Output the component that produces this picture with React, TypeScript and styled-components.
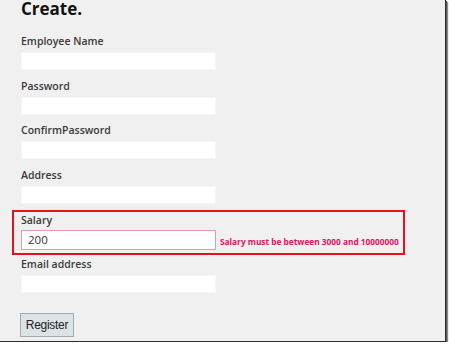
import React from "react";
import styled, { createGlobalStyle } from "styled-components";

const Global = createGlobalStyle`
  html, body { margin: 0; padding: 0; background: #ffffff; }
  body { font-family: "Open Sans", "Noto Sans", sans-serif; }
`;

const Panel = styled.div`
  width: 424px;
  height: 341px;
  padding-left: 21px;
  background: #f0f0f0;
  border-right: 1px solid #2e2e2e;
  border-bottom: 1px solid #2e2e2e;
  box-shadow: 1px 1px 0 #5a5a5a, 2px 2px 1px rgba(0, 0, 0, 0.45);
  display: flex;
  flex-direction: column;
  overflow: hidden;
`;

const Heading = styled.h2`
  margin: 0;
  padding-top: 1px;
  font-family: "Open Sans", sans-serif;
  font-weight: 700;
  font-size: 17px;
  line-height: 16px;
  color: #111;
`;

const Field = styled.div<{ $top: number }>`
  display: flex;
  flex-direction: column;
  margin-top: ${(p) => p.$top}px;
`;

const Label = styled.label`
  font-family: "Open Sans", sans-serif;
  font-size: 10.5px;
  font-weight: 600;
  line-height: 14px;
  height: 14px;
  color: #3a3a3a;
`;

const Row = styled.div`
  display: flex;
  align-items: center;
  margin-top: 4px;
`;

const Input = styled.input<{ $invalid?: boolean }>`
  box-sizing: border-box;
  width: 195px;
  height: ${(p) => (p.$invalid ? 20 : 18)}px;
  margin: 0;
  padding: 0 6px;
  border: 1px solid ${(p) => (p.$invalid ? "#e79aae" : "#f6f6f6")};
  background: #ffffff;
  font-family: "Open Sans", sans-serif;
  font-size: 11.5px;
  color: #333;
  outline: none;
`;

const ErrorBox = styled.div`
  box-sizing: border-box;
  margin-top: 6px;
  margin-left: -9px;
  width: 393px;
  padding: 1px 0 3px 7px;
  border: 2px solid #e8101c;
  display: flex;
  flex-direction: column;

  ${Row} {
    margin-top: 3px;
  }
`;

const ErrorText = styled.span`
  margin-left: 4px;
  margin-top: 3px;
  font-family: "Open Sans", sans-serif;
  font-weight: 700;
  font-size: 8.3px;
  color: #e0125e;
  white-space: nowrap;
`;

const Button = styled.button`
  box-sizing: border-box;
  margin-top: 19.5px;
  margin-left: -1px;
  width: 54px;
  height: 24px;
  padding: 0;
  background: #dce3e7;
  border: 1px solid #a3abb0;
  font-family: "Liberation Sans", Arial, sans-serif;
  font-size: 12px;
  letter-spacing: -0.3px;
  color: #222;
`;

const fields = [
  { label: "Employee Name", top: 17 },
  { label: "Password", top: 8.5 },
  { label: "ConfirmPassword", top: 8.5 },
  { label: "Address", top: 8.5 },
];

export default function App() {
  return (
    <>
      <Global />
      <Panel>
        <Heading>Create.</Heading>
        {fields.map((f) => (
          <Field key={f.label} $top={f.top}>
            <Label>{f.label}</Label>
            <Row>
              <Input type="text" />
            </Row>
          </Field>
        ))}
        <ErrorBox>
          <Label>Salary</Label>
          <Row>
            <Input type="text" $invalid defaultValue="200" />
            <ErrorText>Salary must be between 3000 and 10000000</ErrorText>
          </Row>
        </ErrorBox>
        <Field $top={2.5}>
          <Label>Email address</Label>
          <Row>
            <Input type="text" />
          </Row>
        </Field>
        <Button type="button">Register</Button>
      </Panel>
    </>
  );
}
